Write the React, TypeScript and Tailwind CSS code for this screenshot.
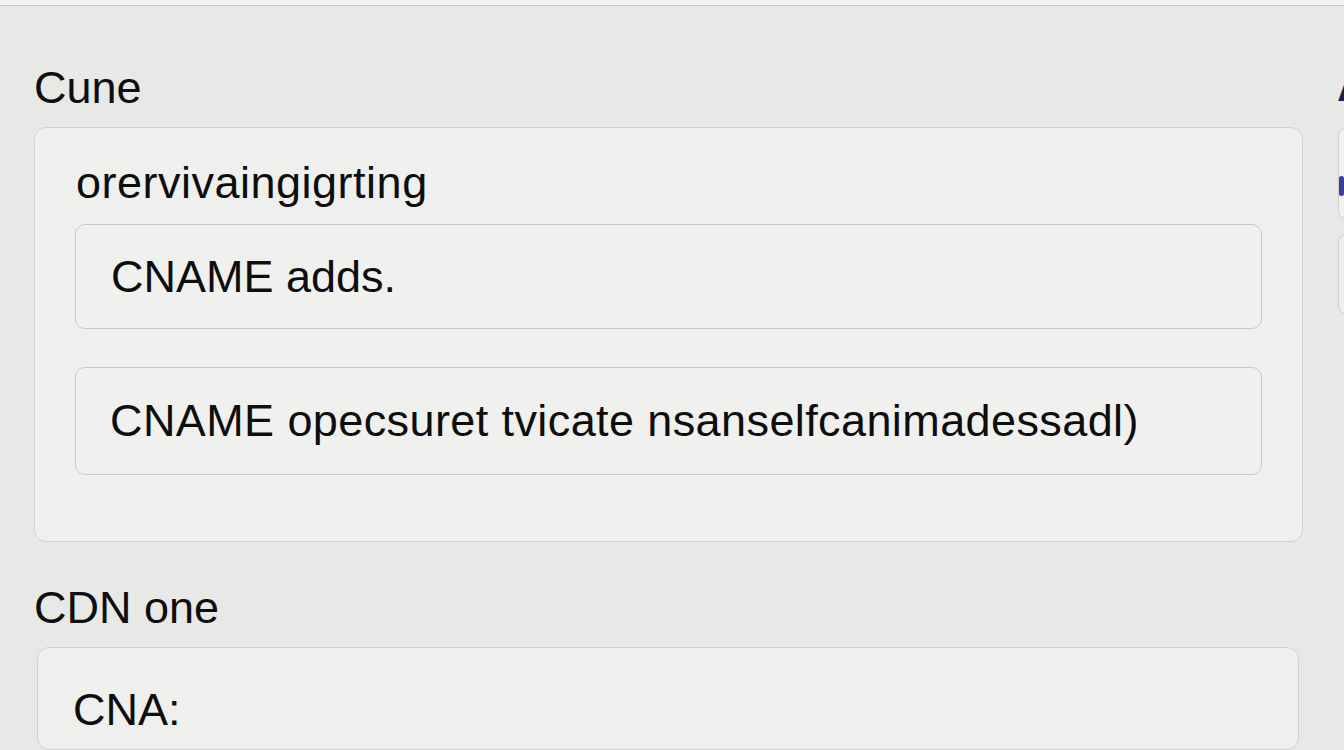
import React from "react";

export default function App() {
  return (
    <div
      className="w-[1344px] h-[750px] overflow-hidden bg-[#e8e8e6] text-[#0e0e0e] flex flex-col"
      style={{ fontFamily: '"Liberation Sans", Arial, sans-serif' }}
    >
      <div className="h-[6px] bg-[#f3f3f2] border-b border-[#c8c8c6] shrink-0" />
      <div className="flex flex-1 min-h-0">
        <div className="w-[1337px] shrink-0 flex flex-col">
          <div className="pl-[34px] pt-[56px] text-[45px] leading-[52px]">Cune</div>
          <div className="ml-[34px] w-[1269px] mt-[13px] rounded-[12px] border border-[#d2d2d0] bg-[#efefed] pt-[29px] pb-[66px] px-[40px] flex flex-col">
            <div className="pl-[1px] text-[45px] leading-[52px] tracking-[0.5px]">orervivaingigrting</div>
            <div className="mt-[15px] h-[105px] rounded-[10px] border border-[#c9c9c7] bg-[#f0f0ee] flex items-center pl-[35px] text-[45px] leading-[52px]">
              CNAME adds.
            </div>
            <div className="mt-[38px] h-[108px] rounded-[10px] border border-[#c9c9c7] bg-[#f0f0ee] flex items-center pl-[34px] text-[45px] leading-[52px] tracking-[0.4px]">
              CNAME opecsuret tvicate nsanselfcanimadessadl)
            </div>
          </div>
          <div className="pl-[34px] mt-[40px] text-[45px] leading-[52px]">CDN one</div>
          <div className="ml-[37px] w-[1262px] mt-[13px] h-[200px] rounded-[12px] border border-[#d2d2d0] bg-[#efefed] pt-[36px] pl-[35px]">
            <div className="text-[45px] leading-[52px]">CNA:</div>
          </div>
        </div>
        <div className="flex-1 min-w-0 overflow-hidden flex flex-col">
          <div className="pt-[54px] text-[45px] leading-[52px] font-bold text-[#1b1f4d] whitespace-nowrap">A</div>
          <div className="mt-[15px] ml-[1px] h-[92px] w-[80px] rounded-l-[8px] border border-[#cfcfcd] bg-[#f1f1ef] pt-[48px]">
            <div className="w-[5px] h-[20px] rounded-[3px] bg-[#3b3f9a]" />
          </div>
          <div className="mt-[15px] ml-[1px] h-[80px] w-[80px] rounded-l-[8px] border border-[#cfcfcd] bg-[#efefed]" />
        </div>
      </div>
    </div>
  );
}
